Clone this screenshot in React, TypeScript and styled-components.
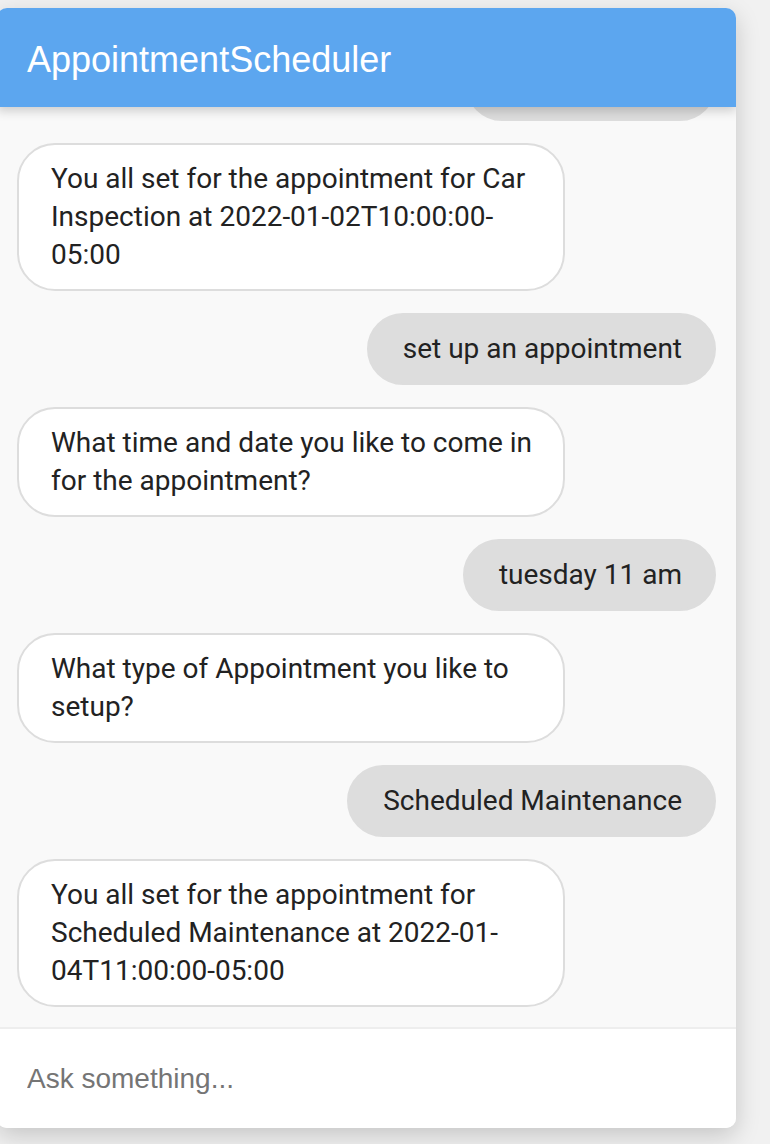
import React from "react";
import styled, { createGlobalStyle } from "styled-components";

const Global = createGlobalStyle`
  html, body { margin: 0; padding: 0; background: #f1f1f1; overflow: hidden; }
  body { width: 770px; height: 1144px; }
  * { box-sizing: border-box; }
`;

const Page = styled.div`
  width: 770px;
  height: 1144px;
  padding-top: 8px;
`;

const Panel = styled.div`
  margin-left: -3px;
  width: 739px;
  height: 1120px;
  border-radius: 10px;
  background: #f9f9f9;
  box-shadow: 0 8px 24px rgba(0, 0, 0, 0.18);
  display: flex;
  flex-direction: column;
  overflow: hidden;
`;

const Header = styled.div`
  height: 99px;
  flex: none;
  background: #5ca6ef;
  color: #ffffff;
  font-family: "Liberation Sans", Arial, sans-serif;
  font-size: 36px;
  display: flex;
  align-items: center;
  padding-left: 30px;
  padding-top: 5px;
  position: relative;
  z-index: 2;
  box-shadow: 0 4px 10px rgba(0, 0, 0, 0.18);
`;

const Messages = styled.div`
  flex: 1;
  min-height: 0;
  overflow: hidden;
  display: flex;
  flex-direction: column;
  justify-content: flex-end;
  gap: 22px;
  padding: 0 20px 20px 20px;
  font-family: Roboto, "Noto Sans", sans-serif;
  font-size: 28px;
  line-height: 38px;
  color: #222222;
`;

const Bubble = styled.div<{ $me?: boolean }>`
  flex: none;
  align-self: ${(p) => (p.$me ? "flex-end" : "flex-start")};
  width: ${(p) => (p.$me ? "auto" : "548px")};
  border-radius: 38px;
  border: 2px solid #dddddd;
  background: ${(p) => (p.$me ? "#dddddd" : "#ffffff")};
  padding: ${(p) => (p.$me ? "15px 32px 15px 34px" : "15px 26px 15px 32px")};
`;

const InputBar = styled.div`
  flex: none;
  height: 101px;
  border-top: 2px solid #eeeeee;
  background: #ffffff;
  display: flex;
  align-items: center;
  padding-left: 30px;
`;

const Input = styled.input`
  border: none;
  outline: none;
  background: transparent;
  width: 100%;
  font-family: "Liberation Sans", Arial, sans-serif;
  font-size: 28px;
  color: #333;
  padding: 0;
  &::placeholder { color: #757575; }
`;

const messages: { me: boolean; text: string }[] = [
  { me: false, text: "What type of Appointment you like to setup?" },
  { me: true, text: "Car Inspection" },
  { me: false, text: "You all set for the appointment for Car Inspection at 2022-01-02T10:00:00-05:00" },
  { me: true, text: "set up an appointment" },
  { me: false, text: "What time and date you like to come in for the appointment?" },
  { me: true, text: "tuesday 11 am" },
  { me: false, text: "What type of Appointment you like to setup?" },
  { me: true, text: "Scheduled Maintenance" },
  { me: false, text: "You all set for the appointment for Scheduled Maintenance at 2022-01-04T11:00:00-05:00" },
];

export default function App() {
  return (
    <Page>
      <Global />
      <Panel>
        <Header>AppointmentScheduler</Header>
        <Messages>
          {messages.map((m, i) => (
            <Bubble key={i} $me={m.me}>
              {m.text}
            </Bubble>
          ))}
        </Messages>
        <InputBar>
          <Input placeholder="Ask something..." />
        </InputBar>
      </Panel>
    </Page>
  );
}
